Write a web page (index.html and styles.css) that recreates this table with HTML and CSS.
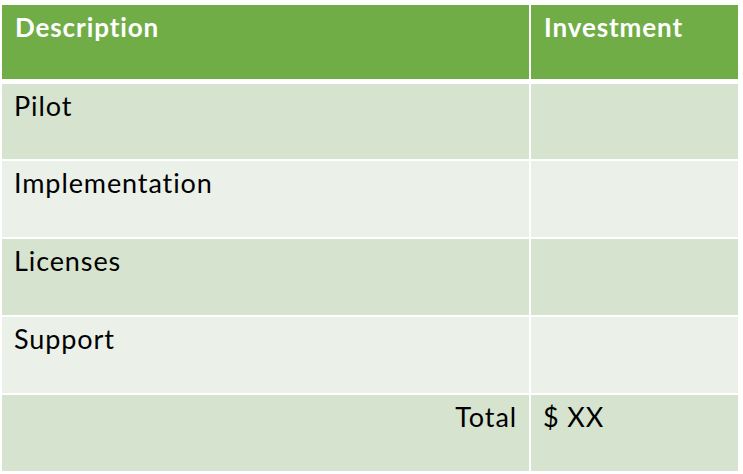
FILE: index.html
```html
<!DOCTYPE html>
<html>
<head>
<meta charset="utf-8">
<link rel="stylesheet" href="styles.css">
</head>
<body>
<div class="table">
  <div class="row head">
    <div class="cell desc">Description</div>
    <div class="cell inv">Investment</div>
  </div>
  <div class="body">
    <div class="row band1 r75">
      <div class="cell desc">Pilot</div>
      <div class="cell inv"></div>
    </div>
    <div class="row band2">
      <div class="cell desc">Implementation</div>
      <div class="cell inv"></div>
    </div>
    <div class="row band1">
      <div class="cell desc">Licenses</div>
      <div class="cell inv"></div>
    </div>
    <div class="row band2">
      <div class="cell desc">Support</div>
      <div class="cell inv"></div>
    </div>
    <div class="row band1">
      <div class="cell desc total">Total</div>
      <div class="cell inv">$ XX</div>
    </div>
  </div>
</div>
</body>
</html>
```
FILE: styles.css
```css
html, body {
  margin: 0;
  padding: 0;
  background: #ffffff;
}
body {
  font-family: Lato, "Open Sans", sans-serif;
  color: #000000;
  font-variant-ligatures: none;
}
.table {
  padding: 5px 0 0 2px;
  width: 736px;
  display: flex;
  flex-direction: column;
}
.row {
  display: flex;
  gap: 2px;
  height: 76px;
}
.row.r75 {
  height: 75px;
}
.body {
  display: flex;
  flex-direction: column;
  gap: 2px;
}
.cell {
  box-sizing: border-box;
  height: 100%;
  font-size: 27px;
  line-height: 1.2;
  letter-spacing: 0.9px;
  padding: 6px 12px 0 12px;
}
.cell.desc {
  width: 527px;
}
.cell.inv {
  width: 207px;
}
.cell.total {
  text-align: right;
  padding-right: 12px;
}
.head {
  height: 74px;
  margin-bottom: 5px;
}
.head .cell {
  background: #70ad47;
  color: #ffffff;
  font-weight: 700;
  font-size: 26px;
  letter-spacing: 0.9px;
  padding-top: 7px;
  padding-left: 13px;
}
.band1 .cell {
  background: #d6e3cf;
}
.band2 .cell {
  background: #ebf0e9;
}
```
